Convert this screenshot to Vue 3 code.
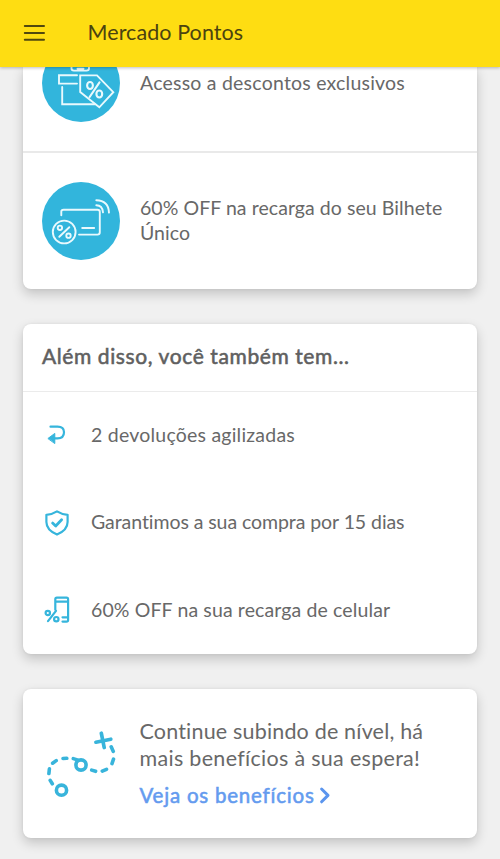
<script setup>
const perks = [
  { icon: 'return', text: '2 devoluções agilizadas' },
  { icon: 'shield', text: 'Garantimos a sua compra por 15 dias' },
  { icon: 'phone', text: '60% OFF na sua recarga de celular' },
]
</script>

<template>
  <div class="screen">
    <header class="topbar">
      <svg class="menu" viewBox="0 0 22 18">
        <path d="M1.8 2H21M1.8 9H21M1.8 15.8H21" />
      </svg>
      <h1>Mercado Pontos</h1>
    </header>

    <main>
      <section class="card benefits">
        <div class="benefit first">
          <svg class="round" viewBox="0 0 78 78">
            <circle class="disc" cx="39" cy="39" r="39" />
            <path d="M29.5 22V24.5Q29.5 26.6 32 26.6H44.5Q47 26.6 47 24.5V22M35.5 24.8H41.5" />
            <path d="M35 31.2H17V39.6H35M20.2 43V60.3H53" />
            <path d="M38.2 31.4H55L71.3 48.2L57.3 63.3L38.2 48Z" />
            <g class="percent">
              <ellipse cx="48" cy="41.5" rx="2.9" ry="3.5" />
              <ellipse cx="57.3" cy="50" rx="2.9" ry="3.5" />
              <path d="M57.5 38.3L47.6 53" />
            </g>
          </svg>
          <p class="t1">Acesso a descontos exclusivos</p>
        </div>
        <div class="benefit second">
          <svg class="round" viewBox="0 0 78 78">
            <circle class="disc" cx="39" cy="39" r="39" />
            <path d="M19.3 33.3V29.5Q19.3 27.7 21.6 27.7H55.5Q57.8 27.7 57.8 30V50.3Q57.8 52.6 55.5 52.6H37M40.2 46H52.2" />
            <circle cx="22.2" cy="50" r="11.4" />
            <circle cx="17.9" cy="45.8" r="2.2" />
            <circle cx="26.5" cy="53.7" r="2.2" />
            <path d="M27.3 45.2L17.3 54.8M54.3 23.3Q60.4 23.5 61 30.3M54.3 18.3Q66.4 18.5 67 30.6" />
          </svg>
          <p class="t2">60% OFF na recarga do seu Bilhete<br />Único</p>
        </div>
      </section>

      <section class="card perks">
        <h2>Além disso, você também tem...</h2>
        <ul>
          <li v-for="perk in perks" :key="perk.icon">
            <svg class="small" viewBox="0 0 30 30">
              <g v-if="perk.icon === 'return'">
                <path d="M8.5 6.7H15.5C20 6.7 22 9 22 12.2C22 15.7 19.8 18.3 15.5 18.3H12" />
                <path class="solid" d="M6.2 18.3L12.8 13.4V23.2Z" />
              </g>
              <g v-else-if="perk.icon === 'shield'">
                <path d="M15 3.4Q20.5 6.8 25.6 6.8V14.1C25.6 20.6 20.5 24.3 15 26.6C9.5 24.3 4.4 20.6 4.4 14.1V6.8Q9.5 6.8 15 3.4Z" />
                <path class="check" d="M10.6 15.1L13.7 18L19.6 11.8" />
              </g>
              <g v-else>
                <path d="M13.3 14.8V4.3Q13.3 2.7 14.9 2.7H24.5Q26.1 2.7 26.1 4.3V25Q26.1 26.6 24.5 26.6H20.5M14 6.6H25.5M20.5 22.3H26" />
                <circle cx="5.8" cy="18" r="2.2" />
                <circle cx="14.3" cy="24.2" r="2.2" />
                <path d="M14 15.8L6 26.2" />
              </g>
            </svg>
            <span :class="perk.icon">{{ perk.text }}</span>
          </li>
        </ul>
      </section>

      <section class="card level">
        <svg class="route" viewBox="0 0 78 78">
          <path class="dash" d="M15.3 53.8L13.2 50.4M11.9 43.5L12.4 38.9M15.6 33.2L19.2 30.6M26 28.5L29.8 28.3M36.3 28.6L40.3 29.9M54.7 40.1L58.6 41.3M65.3 41.1L69.5 39.3M75 33.6L76.5 29.2M76.3 21.4L74.2 16.8" />
          <circle cx="44" cy="35" r="5.1" />
          <circle cx="24.5" cy="60.2" r="5.1" />
          <path class="cross" d="M64.3 3.2L67.2 17.5M58.9 12.2L73.8 9.2" />
        </svg>
        <div>
          <p><span class="l1">Continue subindo de nível, há</span><br /><span class="l2">mais benefícios à sua espera!</span></p>
          <a>Veja os benefícios<svg viewBox="0 0 12 18"><path d="M2.6 3L9 9.4L2.6 15.8" /></svg></a>
        </div>
      </section>
    </main>
  </div>
</template>

<style>
body {
  background: #f0f0f0;
  overflow: hidden;
}
</style>

<style scoped>
.screen {
  height: 859px;
  overflow: hidden;
  background: #f0f0f0;
  color: #686868;
  font-family: Lato, "Liberation Sans", sans-serif;
  font-variant-ligatures: none;
}
h1, h2, p, ul {
  margin: 0;
  padding: 0;
  font-weight: 400;
}
svg {
  display: block;
  flex: none;
  fill: none;
  stroke-linecap: round;
  stroke-linejoin: round;
  overflow: visible;
}
.topbar {
  position: relative;
  z-index: 1;
  box-sizing: border-box;
  height: 67px;
  padding: 0 24px 2px 23px;
  display: flex;
  align-items: center;
  background: #fedd12;
  box-shadow: 0 1px 3px rgba(0, 0, 0, .25);
}
.menu {
  width: 22px;
  height: 18px;
  stroke: #50480e;
  stroke-width: 2;
}
h1 {
  margin: -2px 0 0 42.5px;
  font-size: 21.5px;
  letter-spacing: .08px;
  color: #4b4310;
}
main {
  padding: 0 23px;
}
.card {
  overflow: hidden;
  background: #fff;
  border-radius: 8px;
  box-shadow: 0 5px 12px rgba(0, 0, 0, .19), 0 0 3px rgba(0, 0, 0, .06);
}
.benefits {
  height: 222px;
  border-radius: 0 0 8px 8px;
}
.benefit {
  display: flex;
  padding-left: 19px;
  gap: 20px;
}
.first {
  height: 84px;
  border-bottom: 2px solid #e9e9e9;
}
.first .round {
  margin-top: -23px;
}
.second {
  padding-top: 29px;
}
.round {
  width: 78px;
  height: 78px;
  stroke: #e9f9fd;
  stroke-width: 1.9;
  stroke-linejoin: miter;
}
.disc {
  fill: #32b5dc;
  stroke: none;
}
.percent {
  stroke-width: 2.1;
}
.benefit p {
  font-size: 19.5px;
  line-height: 24.5px;
  white-space: nowrap;
}
.first p {
  padding-top: 4px;
}
.second p {
  padding-top: 14px;
}
.t1 {
  letter-spacing: .22px;
}
.t2 {
  letter-spacing: .06px;
}
.perks {
  margin-top: 35px;
  height: 330px;
}
h2 {
  box-sizing: border-box;
  height: 67.5px;
  padding: 19px 19px 0;
  border-bottom: 1px solid #ebebeb;
  font-size: 21px;
  line-height: 26px;
  letter-spacing: .6px;
  -webkit-text-stroke: .55px currentColor;
  color: #606060;
}
ul {
  list-style: none;
}
li {
  height: 87.5px;
  padding-left: 19px;
  display: flex;
  align-items: center;
  gap: 19px;
  font-size: 19.5px;
  white-space: nowrap;
}
li span {
  margin-top: -2px;
}
.return {
  letter-spacing: .22px;
}
.shield {
  letter-spacing: -.07px;
}
.phone {
  letter-spacing: .12px;
}
.small {
  width: 30px;
  height: 30px;
  stroke: #36b5dc;
  stroke-width: 2.2;
}
.solid {
  fill: #36b5dc;
  stroke-width: 1;
}
.check {
  stroke-width: 2.8;
}
.level {
  box-sizing: border-box;
  margin-top: 35px;
  height: 149px;
  padding: 29px 0 0 14px;
  display: flex;
  gap: 24.5px;
}
.route {
  width: 78px;
  height: 78px;
  margin-top: 12px;
  stroke: #38b4db;
  stroke-width: 3.6;
}
.cross {
  stroke-width: 3.7;
}
.level p {
  font-size: 21.5px;
  line-height: 26.5px;
  white-space: nowrap;
}
.l1 {
  letter-spacing: .18px;
}
.l2 {
  letter-spacing: .3px;
}
a {
  display: flex;
  align-items: center;
  gap: 4.5px;
  margin-top: 11px;
  font-size: 20.5px;
  line-height: 26px;
  letter-spacing: .78px;
  -webkit-text-stroke: .55px currentColor;
  color: #649bef;
}
a svg {
  width: 12px;
  height: 18px;
  stroke: #5b95ee;
  stroke-width: 3;
}
</style>
